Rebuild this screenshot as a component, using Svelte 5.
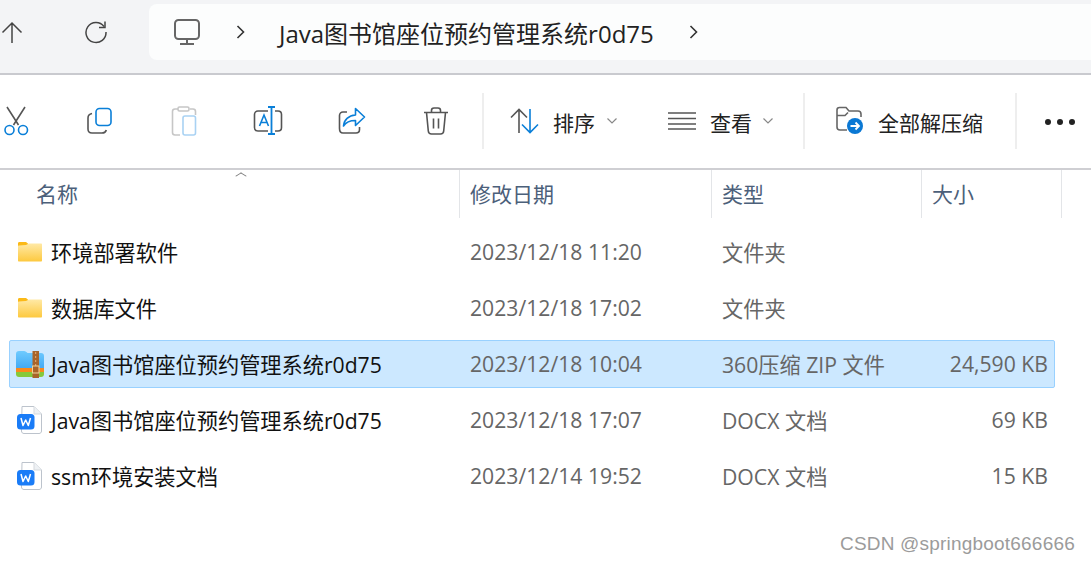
<script>
  const rows = [
    { icon: 'folder', name: '环境部署软件', date: '2023/12/18 11:20', type: '文件夹', size: '' },
    { icon: 'folder', name: '数据库文件', date: '2023/12/18 17:02', type: '文件夹', size: '' },
    { icon: 'zip', name: 'Java图书馆座位预约管理系统r0d75', date: '2023/12/18 10:04', type: '360压缩 ZIP 文件', size: '24,590 KB', selected: true },
    { icon: 'doc', name: 'Java图书馆座位预约管理系统r0d75', date: '2023/12/18 17:07', type: 'DOCX 文档', size: '69 KB' },
    { icon: 'doc', name: 'ssm环境安装文档', date: '2023/12/14 19:52', type: 'DOCX 文档', size: '15 KB' }
  ]
</script>

<div class="window">
  <div class="navbar">
    <svg class="nav-up" width="24" height="24" viewBox="0 0 24 24" fill="none" stroke="#444" stroke-width="1.5">
      <path d="M12 3v20M2.500 12.500L12 3l9.500 9.500" />
    </svg>
    <svg class="nav-refresh" width="24" height="24" viewBox="0 0 24 24" fill="none" stroke="#444" stroke-width="1.5">
      <path d="M20 6.500A10 10 0 1 0 22 12" />
      <path d="M21 1.500v6h-6" />
    </svg>
    <div class="address">
      <svg width="28" height="28" viewBox="0 0 28 28" fill="none" stroke="#666" stroke-width="2">
        <rect x="2" y="2" width="24" height="19" rx="3.500" />
        <path d="M14 21v5M7 26h14" />
      </svg>
      <svg class="crumb-a" width="12" height="16" viewBox="0 0 12 16" fill="none" stroke="#333" stroke-width="1.600">
        <path d="M2.500 2l6 6-6 6" />
      </svg>
      <span class="path">Java图书馆座位预约管理系统r0d75</span>
      <svg class="crumb-b" width="12" height="16" viewBox="0 0 12 16" fill="none" stroke="#333" stroke-width="1.600">
        <path d="M2.500 2l6 6-6 6" />
      </svg>
    </div>
  </div>

  <div class="toolbar">
    <div class="tool">
      <svg width="28" height="30" viewBox="0 0 28 30" fill="none" stroke-width="1.600">
        <path d="M5 1l11.500 18M23 1L11.500 19" stroke="#555" />
        <circle cx="7.500" cy="24" r="4.500" stroke="#0a7fd8" />
        <circle cx="21" cy="24" r="4.500" stroke="#0a7fd8" />
      </svg>
    </div>
    <div class="tool">
      <svg width="28" height="28" viewBox="0 0 28 28" fill="none" stroke-width="1.600">
        <path d="M6 6.500C3.500 7 2 8.500 2 11v11c0 2.500 1.500 4 4 4h10c2 0 3.800-1 4.300-3" stroke="#555" />
        <rect x="10" y="1.500" width="15" height="17" rx="3.500" stroke="#0a7fd8" />
      </svg>
    </div>
    <div class="tool">
      <svg width="26" height="30" viewBox="0 0 26 30" fill="none" stroke-width="1.600">
        <path d="M7 3H4C2.500 3 1.500 4 1.500 5.500v21C1.500 28 2.500 29 4 29h5M19 3h3c1.500 0 2.500 1 2.500 2.500V9" stroke="#c6c6c6" />
        <rect x="7" y="1" width="11" height="4" rx="1.500" stroke="#c6c6c6" />
        <rect x="12" y="10" width="12.500" height="19" rx="2" stroke="#a9d2f3" />
      </svg>
    </div>
    <div class="tool">
      <svg width="30" height="30" viewBox="0 0 30 30" fill="none" stroke-width="1.600">
        <path d="M15 5H5C3 5 1.500 6.500 1.500 8.500v13C1.500 23.500 3 25 5 25h10M22 5h3c2 0 3.500 1.500 3.500 3.500v13c0 2-1.500 3.500-3.500 3.500h-3" stroke="#555" />
        <path d="M18.500 1v27M15 1h7M15 28h7" stroke="#0a7fd8" stroke-width="1.800" />
        <path d="M6.500 20L11 9l4.500 11M8 16.500h6" stroke="#0a7fd8" />
      </svg>
    </div>
    <div class="tool">
      <svg width="28" height="28" viewBox="0 0 28 28" fill="none" stroke-width="1.600">
        <path d="M9 5H5C3 5 1.500 6.500 1.500 8.500v13C1.500 24.500 3 26 5 26h13c2 0 3.500-1.500 3.500-3.500V20" stroke="#555" />
        <path d="M17.500 1.500L26.500 10l-9 8.500v-5C12 13.500 8 15 5.500 19c.5-6 5-10.500 12-11z" stroke="#0a7fd8" stroke-linejoin="round" />
      </svg>
    </div>
    <div class="tool">
      <svg width="26" height="28" viewBox="0 0 26 28" fill="none" stroke="#555" stroke-width="1.600">
        <path d="M1 5.500h24M8.500 5.500V3.500C8.500 2 9.500 1 11 1h4c1.500 0 2.500 1 2.500 2.500v2M3.500 5.500l1.800 18.500c.2 2 1.500 3 3.200 3h9c1.700 0 3-1 3.200-3l1.800-18.500M10.500 11.500v10M15.500 11.500v10" />
      </svg>
    </div>
    <div class="sep first"></div>
    <div class="action sort">
      <svg width="30" height="26" viewBox="0 0 30 26" fill="none" stroke-width="1.600">
        <path d="M9 25V1.500M1 9.500l8-8 8 8" stroke="#555" />
        <path d="M20 1v23.500M12 16.500l8 8 8-8" stroke="#0a7fd8" />
      </svg>
      <span>排序</span>
      <svg class="chev" width="12" height="8" viewBox="0 0 12 8" fill="none" stroke="#888" stroke-width="1.200">
        <path d="M1.500 1.500L6 6l4.500-4.500" />
      </svg>
    </div>
    <div class="action view">
      <svg width="28" height="20" viewBox="0 0 28 20" fill="none" stroke="#555" stroke-width="1.500">
        <path d="M0 2h28M0 7.500h28M0 13h28M0 18h28" />
      </svg>
      <span>查看</span>
      <svg class="chev" width="12" height="8" viewBox="0 0 12 8" fill="none" stroke="#888" stroke-width="1.200">
        <path d="M1.500 1.500L6 6l4.500-4.500" />
      </svg>
    </div>
    <div class="sep second"></div>
    <div class="action extract">
      <svg width="30" height="30" viewBox="0 0 30 30" fill="none">
        <path d="M11 24H4c-2 0-3-1-3-3V4c0-1.500 1-2.500 2.500-2.500h6.500l3 3.500h9c2 0 3 1 3 3v3M1 9.500h8l3-3" stroke="#666" stroke-width="1.600" />
        <circle cx="19" cy="20" r="8" fill="#0a78d4" />
        <path d="M14.500 20h8.500M19.500 16.500l3.500 3.500-3.500 3.500" stroke="#fff" stroke-width="1.800" />
      </svg>
      <span>全部解压缩</span>
    </div>
    <div class="sep third"></div>
    <div class="more"><i></i><i></i><i></i></div>
  </div>

  <div class="header">
    <span class="sort-caret"></span>
    <div class="hcell name">名称</div>
    <div class="hcell date">修改日期</div>
    <div class="hcell type">类型</div>
    <div class="hcell size">大小</div>
  </div>

  <div class="list">
    {#each rows as row}
      <div class="row" class:selected={row.selected}>
        <div class="cell-name">
          {#if row.icon === 'folder'}
            <svg class="ficon" width="28" height="28" viewBox="0 0 28 28">
              <defs>
                <linearGradient id="fold" x1="0" y1="0" x2="0" y2="1">
                  <stop offset="0" stop-color="#ffe9a6" />
                  <stop offset="1" stop-color="#fdc93f" />
                </linearGradient>
              </defs>
              <path d="M2 5.500C2 4.500 2.500 4 3.500 4h6.500L13 6.500v4H2z" fill="#fbb917" />
              <path d="M2 8.500c0-.6.400-1 1-1l7-.5 3-1.500h12c.6 0 1 .4 1 1v16c0 .6-.4 1-1 1H3c-.6 0-1-.4-1-1z" fill="url(#fold)" />
            </svg>
          {:else if row.icon === 'zip'}
            <svg class="ficon" width="28" height="28" viewBox="0 0 28 28">
              <defs>
                <linearGradient id="zipblue" x1="0" y1="0" x2="0" y2="1">
                  <stop offset="0" stop-color="#6fcbff" />
                  <stop offset="1" stop-color="#3fa6f2" />
                </linearGradient>
              </defs>
              <path d="M0 4c0-2 1-3 3-3h5c1.500 0 2.500 1 3.500 2H25c2 0 3 1 3 3v14H0z" fill="url(#zipblue)" />
              <path d="M0 18h28v4H0z" fill="#f98a1c" />
              <path d="M0 22h28v2c0 2-1 3-3 3H3c-2 0-3-1-3-3z" fill="#85c93c" />
              <rect x="16.500" y="1" width="6.500" height="27" fill="#a8642a" />
              <path d="M19.700 2v2M19.700 6v2M19.700 10v2M19.700 14v2" stroke="#e0b078" stroke-width="1" />
              <rect x="16.500" y="16" width="6.500" height="7" fill="none" stroke="#f0d29a" stroke-width="1" />
            </svg>
          {:else}
            <svg class="ficon" width="28" height="28" viewBox="0 0 28 28">
              <path d="M6 .5h12l7.500 7.500V25c0 1.500-1 2.500-2.500 2.500H8c-1.500 0-2.500-1-2.500-2.500z" fill="#fff" stroke="#bcc3cc" stroke-width="1" />
              <path d="M18 .5V8h7.500" fill="#eef1f4" stroke="#d5d9de" stroke-width="1" />
              <rect x="1" y="8" width="17.500" height="15.500" rx="3.500" fill="#1a7cf7" />
              <path d="M5 12l2 7.500 2.700-5.500 2.600 5.500L14.500 12" fill="none" stroke="#fff" stroke-width="1.500" stroke-linejoin="round" />
            </svg>
          {/if}
          <span class="fname">{row.name}</span>
        </div>
        <div class="muted">{row.date}</div>
        <div class="muted">{row.type}</div>
        <div class="muted right">{row.size}</div>
      </div>
    {/each}
  </div>

  <div class="mark">CSDN @springboot666666</div>
</div>

<style>
  :global(body) {
    background: #fff;
    overflow: hidden;
  }
  .window {
    position: relative;
    width: 1091px;
    height: 563px;
    overflow: hidden;
    font-family: "Open Sans", "Noto Sans CJK SC", sans-serif;
    font-size: 21px;
    color: #1a1a1a;
    background: #fff;
  }
  .navbar {
    display: flex;
    align-items: center;
    box-sizing: border-box;
    padding-top: 4px;
    padding-bottom: 13px;
    background: #f3f4f6;
    border-bottom: 2px solid #c9cacf;
    height: 75px;
  }
  .navbar svg {
    flex: none;
  }
  .nav-refresh {
    margin-left: 60px;
  }
  .address {
    display: flex;
    align-items: center;
    flex: none;
    width: 1000px;
    height: 56px;
    margin-left: 41px;
    padding-left: 24px;
    background: #fcfdfd;
    border-radius: 8px;
  }
  .crumb-a {
    margin-left: 34px;
  }
  .path {
    margin-left: 32px;
    font-size: 24px;
    white-space: nowrap;
    color: #222;
  }
  .crumb-b {
    margin-left: 34px;
  }
  .toolbar {
    display: flex;
    align-items: center;
    height: 95px;
    box-sizing: border-box;
    border-bottom: 2px solid #cfcfd3;
    margin-left: -26px;
    padding-bottom: 2px;
  }
  .tool {
    display: flex;
    justify-content: center;
    width: 84px;
    flex: none;
  }
  .sep {
    flex: none;
    width: 2px;
    height: 56px;
    background: #eeeeee;
  }
  .sep.first {
    margin-left: 4px;
  }
  .action {
    display: flex;
    align-items: center;
    flex: none;
    color: #222;
  }
  .action span {
    margin-top: 2px;
  }
  .sort {
    width: 157px;
    padding-left: 26px;
    box-sizing: border-box;
  }
  .sort span {
    margin-left: 13px;
  }
  .chev {
    margin-left: 11px;
  }
  .view {
    width: 162px;
    padding-left: 27px;
    box-sizing: border-box;
  }
  .view span {
    margin-left: 14px;
  }
  .view .chev {
    margin-left: 10px;
  }
  .extract {
    width: 210px;
    padding-left: 31px;
    box-sizing: border-box;
  }
  .extract span {
    margin-left: 12px;
  }
  .more {
    display: flex;
    gap: 6px;
    margin-left: 28px;
    margin-top: 2px;
  }
  .more i {
    width: 6px;
    height: 6px;
    border-radius: 50%;
    background: #222;
  }
  .header {
    position: relative;
    display: grid;
    grid-template-columns: 460px 252px 210px 140px;
    height: 48px;
    color: #4c607a;
    font-size: 21px;
  }
  .hcell {
    display: flex;
    align-items: center;
    padding-left: 10px;
    border-right: 1px solid #e3e5e8;
    box-sizing: border-box;
    padding-bottom: 2px;
  }
  .hcell.name {
    padding-left: 36px;
  }
  .sort-caret {
    position: absolute;
    left: 237px;
    top: 2px;
    width: 7px;
    height: 7px;
    border-left: 1px solid #777;
    border-top: 1px solid #777;
    transform: scale(1, .6) rotate(45deg);
  }
  .list {
    display: flex;
    flex-direction: column;
    gap: 8px;
    margin: 10px 36px 0 9px;
    font-size: 21.2px;
  }
  .row {
    display: grid;
    grid-template-columns: 451px 252px 210px 123px;
    align-items: center;
    height: 48px;
    box-sizing: border-box;
    border: 1px solid transparent;
    border-radius: 2px;
  }
  .row.selected {
    background: #cce8ff;
    border-color: #99d1ff;
  }
  .cell-name {
    display: grid;
    grid-template-columns: 36px 1fr;
    align-items: center;
    padding-left: 5px;
    min-width: 0;
  }
  .ficon {
    margin-left: 1px;
  }
  .fname {
    white-space: nowrap;
    color: #111;
    padding-bottom: 2px;
  }
  .muted {
    padding-left: 9px;
    padding-bottom: 2px;
    color: #666;
    white-space: nowrap;
  }
  .right {
    text-align: right;
    margin-right: -2px;
  }
  .mark {
    position: absolute;
    left: 840px;
    top: 533px;
    font-family: "Liberation Sans", sans-serif;
    font-size: 19px;
    color: #9b9b9b;
    letter-spacing: .2px;
    white-space: nowrap;
  }
</style>
